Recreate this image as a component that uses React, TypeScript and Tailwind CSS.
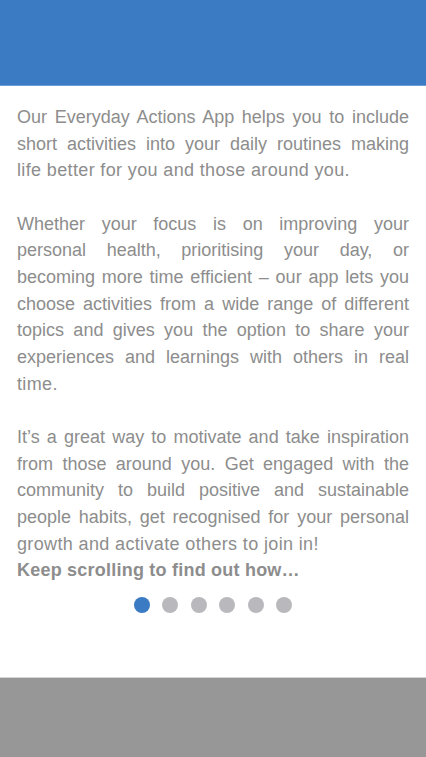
const paragraphs: string[][] = [
  [
    "Our Everyday Actions App helps you to include",
    "short activities into your daily routines making",
    "life better for you and those around you.",
  ],
  [
    "Whether your focus is on improving your",
    "personal health, prioritising your day, or",
    "becoming more time efficient – our app lets you",
    "choose activities from a wide range of different",
    "topics and gives you the option to share your",
    "experiences and learnings with others in real",
    "time.",
  ],
  [
    "It’s a great way to motivate and take inspiration",
    "from those around you. Get engaged with the",
    "community to build positive and sustainable",
    "people habits, get recognised for your personal",
    "growth and activate others to join in!",
  ],
];

export default function App() {
  const dots = [true, false, false, false, false, false];

  return (
    <div className="flex min-h-[757px] flex-col bg-white font-['Liberation_Sans',Arial,sans-serif]">
      <header className="h-[86px] border-b border-[#6a9bd6] bg-[#3a7bc4]" />

      <main className="flex-1 px-[17px] pt-[18px] text-[18px] leading-[26.67px] text-[#8d8d8d]">
        {paragraphs.map((lines, p) => (
          <p key={p} className={p > 0 ? "mt-[26.67px]" : ""}>
            {lines.map((line, i) =>
              i < lines.length - 1 ? (
                <span key={i} className="block whitespace-nowrap text-justify [text-align-last:justify]">
                  {line}
                </span>
              ) : (
                <span key={i} className="block whitespace-nowrap tracking-[0.36px]">
                  {line}
                </span>
              )
            )}
          </p>
        ))}
        <p className="font-bold tracking-[0.22px]">Keep scrolling to find out how…</p>

        <div className="mt-[13px] flex justify-center gap-[12.4px]">
          {dots.map((active, i) => (
            <span
              key={i}
              className={
                active ? "h-4 w-4 rounded-full bg-[#3a7bc4]" : "h-4 w-4 rounded-full bg-[#b9b9bd]"
              }
            />
          ))}
        </div>
      </main>

      <footer className="h-[80px] border-t border-[#d4d4d4] bg-[#979797]" />
    </div>
  );
}
